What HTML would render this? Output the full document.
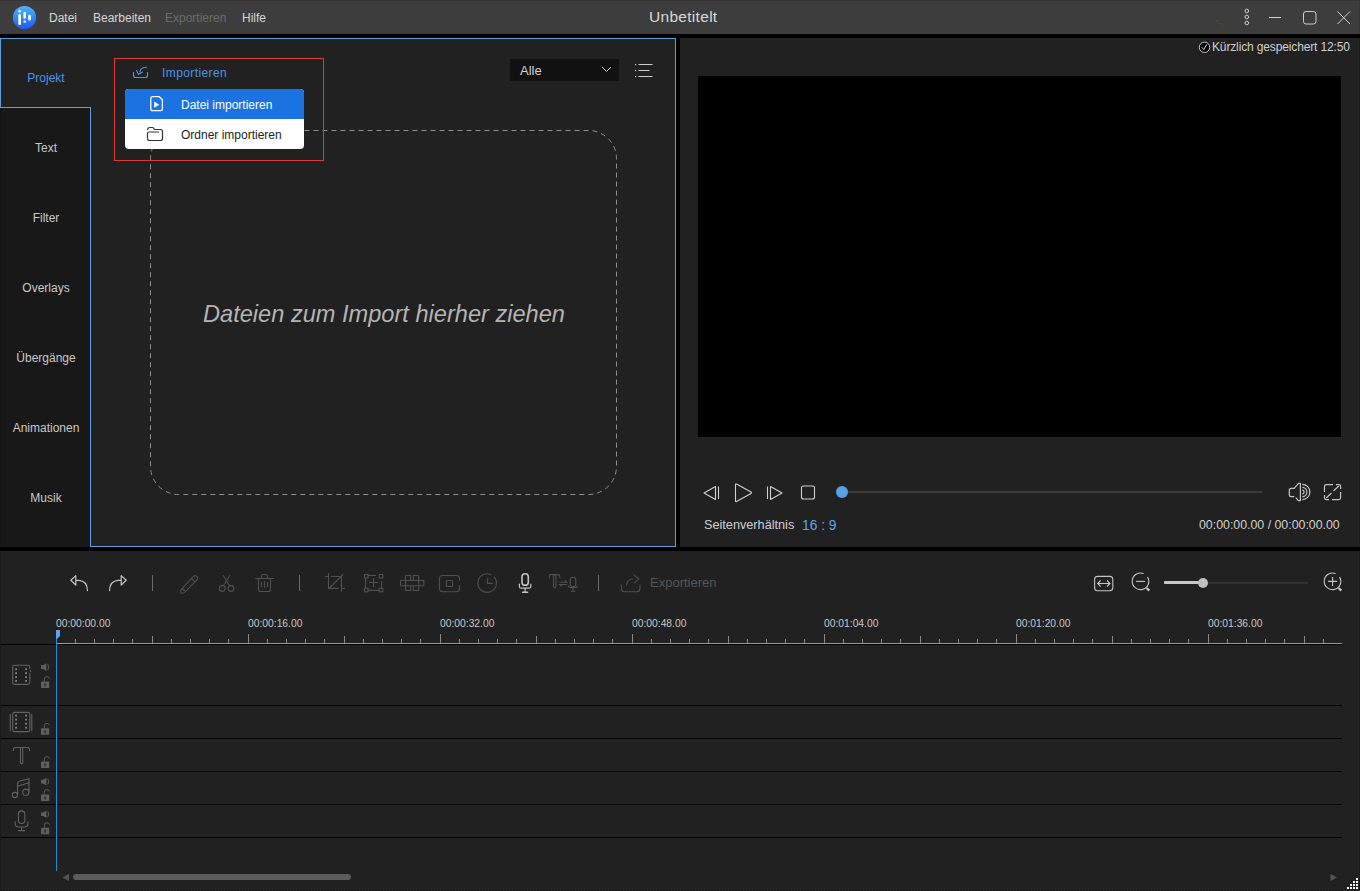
<!DOCTYPE html>
<html><head><meta charset="utf-8">
<style>
*{margin:0;padding:0;box-sizing:border-box}
html,body{width:1360px;height:891px;overflow:hidden;background:#000;font-family:"Liberation Sans",sans-serif}
.a{position:absolute}
.t{position:absolute;white-space:nowrap;line-height:1}
svg{position:absolute;overflow:visible}
#title{left:0;top:0;width:1360px;height:34px;background:#3d3d3d;border-top:1px solid #353535}
#left{left:0;top:38px;width:676px;height:509px;background:#212121}
#side{left:0;top:108px;width:90px;height:439px;background:#181818}
#right{left:680px;top:38px;width:680px;height:509px;background:#212121}
#video{left:698px;top:76px;width:643px;height:361px;background:#000}
#tl{left:0;top:551px;width:1360px;height:340px;background:#212121}
.bl{background:#5d9fdf}
.side{font-size:12px;color:#c8c8c8;left:1px;width:90px;text-align:center}
.menu{font-size:12px;color:#d6d6d6;top:12px}
.rl{font-size:10.3px;color:#c8c8c8;top:619px}
.tk{position:absolute;width:1px;background:#8a8a8a}
.tr{position:absolute;left:0;width:1342px;height:1px;background:#050505}
</style></head>
<body>
<!-- title bar -->
<div id="title" class="a"></div>
<svg style="left:12px;top:5px" width="26" height="26" viewBox="0 0 26 26">
  <defs><linearGradient id="lg" x1="0" y1="0" x2="0" y2="1"><stop offset="0" stop-color="#52b4ff"/><stop offset="0.55" stop-color="#2f86f8"/><stop offset="1" stop-color="#2356ee"/></linearGradient></defs>
  <circle cx="12.5" cy="12.5" r="11.6" fill="url(#lg)"/>
  <rect x="6.3" y="5.1" width="2.7" height="2.3" rx="1.15" fill="#fff"/>
  <rect x="6.3" y="9" width="2.7" height="11" rx="1.3" fill="#fff"/>
  <rect x="11.4" y="7.1" width="2.5" height="6.6" rx="1.25" fill="#fff"/>
  <rect x="11.4" y="15.6" width="2.5" height="2.2" rx="1.1" fill="#fff"/>
  <rect x="16.2" y="9.8" width="2.7" height="5.8" rx="1.3" fill="#fff"/>
</svg>
<span class="t menu" style="left:49px">Datei</span>
<span class="t menu" style="left:93px">Bearbeiten</span>
<span class="t menu" style="left:165px;color:#6c6c6c">Exportieren</span>
<span class="t menu" style="left:242px">Hilfe</span>
<span class="t" style="left:649px;top:9px;font-size:15.5px;letter-spacing:0.3px;color:#d8d8d8">Unbetitelt</span>
<svg style="left:1200px;top:0" width="160" height="34">
  <line x1="16.5" y1="20" x2="22.5" y2="26.5" stroke="#6a5a3a" stroke-width="1" stroke-dasharray="2 2"/>
  <circle cx="46.8" cy="11" r="1.8" fill="none" stroke="#cfcfcf" stroke-width="1"/>
  <circle cx="46.8" cy="17" r="1.8" fill="none" stroke="#cfcfcf" stroke-width="1"/>
  <circle cx="46.8" cy="23" r="1.8" fill="none" stroke="#cfcfcf" stroke-width="1"/>
  <line x1="69" y1="17.5" x2="81" y2="17.5" stroke="#cfcfcf" stroke-width="1"/>
  <rect x="103.5" y="11.5" width="12.5" height="12.5" rx="2.5" fill="none" stroke="#cfcfcf" stroke-width="1"/>
  <path d="M137.5 11.5 L150 24 M150 11.5 L137.5 24" stroke="#cfcfcf" stroke-width="1"/>
</svg>

<!-- left panel -->
<div id="left" class="a"></div>
<div id="side" class="a"></div>
<div class="a bl" style="left:0;top:38px;width:676px;height:1px"></div>
<div class="a bl" style="left:675px;top:38px;width:1px;height:509px"></div>
<div class="a bl" style="left:90px;top:546px;width:586px;height:1px"></div>
<div class="a bl" style="left:90px;top:107px;width:1px;height:440px"></div>
<div class="a bl" style="left:0;top:107px;width:91px;height:1px"></div>
<div class="a bl" style="left:0;top:38px;width:1px;height:70px"></div>

<span class="t side" style="top:72px;color:#4a94ec">Projekt</span>
<span class="t side" style="top:142px">Text</span>
<span class="t side" style="top:212px">Filter</span>
<span class="t side" style="top:282px">Overlays</span>
<span class="t side" style="top:352px">Übergänge</span>
<span class="t side" style="top:422px">Animationen</span>
<span class="t side" style="top:492px">Musik</span>

<!-- drop zone -->
<svg style="left:0;top:0" width="1360" height="891">
  <rect x="150.5" y="130.5" width="466" height="364" rx="28" fill="none" stroke="#8e8e8e" stroke-width="1" stroke-dasharray="5 4"/>
</svg>
<span class="t" style="left:203px;top:303px;font-size:23.6px;font-style:italic;color:#b4b4b4">Dateien zum Import hierher ziehen</span>

<!-- import dropdown -->
<div class="a" style="left:114px;top:58px;width:210px;height:103px;border:1px solid #e03a3a"></div>
<svg style="left:132px;top:65px" width="18" height="14" viewBox="0 0 18 14">
  <path d="M1.5 7 V10.5 Q1.5 12.5 3.5 12.5 H13.5 Q15.5 12.5 15.5 10.5 V7" fill="none" stroke="#4a94ec" stroke-width="1.1"/>
  <path d="M4.5 5.5 L6.5 9.5 L10.5 7 M7.8 6.8 Q9 2.3 14.5 2.3" fill="none" stroke="#4a94ec" stroke-width="1.1" stroke-linejoin="round" stroke-linecap="round"/>
</svg>
<span class="t" style="left:162px;top:67px;font-size:12px;letter-spacing:0.4px;color:#4a94ec">Importieren</span>
<div class="a" style="left:125px;top:89px;width:179px;height:60px;background:#fff;border-radius:4px;overflow:hidden">
  <div class="a" style="left:0;top:0;width:179px;height:30px;background:#1a73e0"></div>
</div>
<svg style="left:149px;top:95px" width="16" height="18" viewBox="0 0 16 18">
  <path d="M1.8 3.5 Q1.8 1.7 3.6 1.7 H10.3 L13.4 4.8 V13.9 Q13.4 15.7 11.6 15.7 H3.6 Q1.8 15.7 1.8 13.9 Z" fill="none" stroke="#fff" stroke-width="1.3" stroke-linejoin="round"/>
  <path d="M5.2 6.6 L10.2 9.7 L5.2 12.8 Z" fill="#fff"/>
</svg>
<span class="t" style="left:181px;top:99px;font-size:12px;color:#fff">Datei importieren</span>
<svg style="left:146px;top:126px" width="18" height="16" viewBox="0 0 18 16">
  <path d="M1.5 12.5 V7.5 Q1.5 6 3 6 H13" fill="none" stroke="#333" stroke-width="1.2"/>
  <path d="M1.5 4 Q1.5 1.5 4 1.5 H6.5 Q7.5 1.5 8.5 3.5 H14.5 Q16.5 3.5 16.5 5.5 V12.5 Q16.5 14.5 14.5 14.5 H3.5 Q1.5 14.5 1.5 12.5" fill="none" stroke="#333" stroke-width="1.2"/>
</svg>
<span class="t" style="left:181px;top:129px;font-size:12px;color:#222">Ordner importieren</span>

<!-- Alle dropdown -->
<div class="a" style="left:510px;top:59px;width:109px;height:22px;background:#111"></div>
<span class="t" style="left:520px;top:64px;font-size:13px;color:#d0d0d0">Alle</span>
<svg style="left:600px;top:65px" width="14" height="10">
  <path d="M2 2 L6.5 6.5 L11 2" fill="none" stroke="#d0d0d0" stroke-width="1"/>
</svg>
<svg style="left:630px;top:60px" width="26" height="20">
  <rect x="5" y="4" width="1.2" height="1.2" fill="#ccc"/>
  <rect x="5" y="10" width="1.2" height="1.2" fill="#ccc"/>
  <rect x="5" y="16" width="1.2" height="1.2" fill="#ccc"/>
  <line x1="8.5" y1="4.5" x2="22.5" y2="4.5" stroke="#ccc" stroke-width="1"/>
  <line x1="8.5" y1="10.5" x2="19.5" y2="10.5" stroke="#ccc" stroke-width="1"/>
  <line x1="8.5" y1="16.5" x2="22.5" y2="16.5" stroke="#ccc" stroke-width="1"/>
</svg>

<!-- right panel -->
<div id="right" class="a"></div>
<div id="video" class="a"></div>
<svg style="left:1198px;top:41px" width="13" height="13">
  <circle cx="6.5" cy="6.3" r="5.2" fill="#000" stroke="#c8c8c8" stroke-width="1"/>
  <path d="M3.8 6.3 L5.8 8.6 L8.8 3.3" fill="none" stroke="#d0d0d0" stroke-width="1"/>
</svg>
<span class="t" style="left:1212px;top:41px;font-size:12px;letter-spacing:-0.14px;color:#d0d0d0">Kürzlich gespeichert 12:50</span>


<!-- playback controls -->
<svg style="left:700px;top:480px" width="140" height="26">
  <path d="M15.5 6.5 L4 13 L15.5 19.5 Z" fill="none" stroke="#d0d0d0" stroke-width="1.1" stroke-linejoin="round"/>
  <line x1="18.5" y1="6.5" x2="18.5" y2="19" stroke="#d0d0d0" stroke-width="1.1"/>
  <path d="M35.5 4.5 Q35.5 3.5 36.5 4 L51 12 Q52 12.8 51 13.5 L36.5 21.5 Q35.5 22 35.5 21 Z" fill="none" stroke="#d0d0d0" stroke-width="1.1" stroke-linejoin="round"/>
  <line x1="67.5" y1="6.5" x2="67.5" y2="19" stroke="#d0d0d0" stroke-width="1.1"/>
  <path d="M70.5 6.5 L82 13 L70.5 19.5 Z" fill="none" stroke="#d0d0d0" stroke-width="1.1" stroke-linejoin="round"/>
  <rect x="101.5" y="6" width="13" height="13" rx="2" fill="none" stroke="#d0d0d0" stroke-width="1.1"/>
</svg>
<div class="a" style="left:848px;top:491px;width:414px;height:2px;background:#3a3a3a"></div>
<div class="a" style="left:836px;top:486px;width:12px;height:12px;border-radius:50%;background:#5aa0e6"></div>
<svg style="left:0;top:0" width="1360" height="891">
  <g fill="none" stroke="#c4c4c4" stroke-width="1.2" stroke-linejoin="round">
  <path d="M1295.8 497.6 L1298.3 500.6 H1300.4 V483.4 H1298.5 L1294.2 488.4 H1291.2 Q1289.3 488.4 1289.3 490.3 V494.8 Q1289.3 496.7 1291.2 496.7 H1294.3"/>
  <path d="M1302.3 484.4 A7.6 7.6 0 0 1 1302.3 499.6 M1302.3 487.4 A4.6 4.6 0 0 1 1302.3 496.6 M1302.3 490.2 A1.8 1.8 0 0 1 1302.3 493.8"/>
  <path d="M1333 484.6 H1326.3 Q1324.5 484.6 1324.5 486.4 V492 M1324.5 495 V497.8 Q1324.5 499.6 1326.3 499.6 H1329 M1332 499.6 H1338.8 Q1340.6 499.6 1340.6 497.8 V492 M1340.6 489 V486.4 Q1340.6 484.6 1338.8 484.6 H1336"/>
  <path d="M1326.2 498 L1331.5 493 M1333.5 491 L1338.8 486"/>
  </g>
</svg>
<span class="t" style="left:704px;top:519px;font-size:12.7px;color:#d0d0d0">Seitenverhältnis</span>
<span class="t" style="left:802px;top:519px;font-size:13.8px;color:#5aa5f0">16 : 9</span>
<span class="t" style="left:1199px;top:519px;font-size:12.35px;color:#d0d0d0">00:00:00.00 / 00:00:00.00</span>

<!-- timeline -->
<div id="tl" class="a"></div>

<svg style="left:0;top:0" width="1360" height="891">
  <g fill="none" stroke="#c4c4c4" stroke-width="1.2" stroke-linejoin="round" stroke-linecap="round">
  <path d="M75.8 575.6 L70.8 580.3 L75.8 585 Z M76 580.4 H78.8 Q87.4 581 87.4 590.6"/>
  <path d="M121.2 575.6 L126.2 580.3 L121.2 585 Z M121 580.4 H118.2 Q109.6 581 109.6 590.6"/>
  </g>
  <g fill="none" stroke="#6a6a6a" stroke-width="1">
  <path d="M152.5 575 V591 M299.5 575 V591 M598.5 575 V591"/>
  </g>
  <g fill="none" stroke="#505050" stroke-width="1.1">
  <!-- pencil -->
  <path d="M193.2 576.6 Q195 574.8 196.8 576.6 Q198.5 578.4 196.7 580.2 L184.6 592.3 Q183.6 593.2 181.6 593.2 Q180.6 593.2 180.6 592.2 Q180.6 590.4 181.4 589.4 Z M191.5 578.3 L195 581.8 M182.3 588.5 L185.4 591.6"/>
  <!-- scissors -->
  <path d="M223 575 L229.6 586 M230 575 L223.4 586"/>
  <circle cx="222.3" cy="588.5" r="2.9"/><circle cx="231" cy="588.5" r="2.9"/>
  <!-- trash -->
  <path d="M255 578.5 H274 M261.5 578.5 V576.5 Q261.5 574.5 263.5 574.5 H265.5 Q267.5 574.5 267.5 576.5 V578.5 M258.5 578.5 V589.5 Q258.5 591.5 260.5 591.5 H268.5 Q270.5 591.5 270.5 589.5 V578.5 M261.5 582 V587 M264.5 581 V588 M267.5 582 V587"/>
  <!-- crop -->
  <path d="M325 576.5 H328.5 M328.5 573 V588.4 H338.8 M331 576.5 H341.5 V591.8 M341.5 588.4 H345 M329.5 588 L343.4 574.2"/>
  <!-- select -->
  <rect x="364.5" y="574.5" width="3.5" height="3.5"/><rect x="379.3" y="574.5" width="3.5" height="3.5"/>
  <rect x="364.5" y="588.3" width="3.5" height="3.5"/><rect x="379.3" y="588.3" width="3.5" height="3.5"/>
  <path d="M368 575.5 H376 M365.5 578 V588.3 M381.5 581 V588.3 M368 590.4 H379.3 M369.2 582.5 H378 M373.5 578 V587"/>
  <!-- puzzle -->
  <path d="M400.5 580.5 H423.8 V585.8 H400.5 Z M405.5 575.5 V590.5 H410.7 V585.8 M405.5 575.5 H410.7 V580.5 M418.7 575.5 V590.5 H413.3 V585.8 M418.7 575.5 H413.3 V580.5"/>
  <!-- screen -->
  <path d="M459.5 581 V578.5 Q459.5 575.5 456.5 575.5 H442.5 Q439.5 575.5 439.5 578.5 V588.7 Q439.5 591.7 442.5 591.7 H456.5 Q459.5 591.7 459.5 588.7 V585.2"/>
  <rect x="446.3" y="580.5" width="6.3" height="6" rx="1"/>
  <!-- clock -->
  <path d="M491.2 574.7 A9.3 9.3 0 1 0 494 576.8"/>
  <path d="M487.5 578 V583.4 H492.8"/>
  <!-- tts -->
  <path d="M549.3 578.3 V576 Q549.3 574.6 550.8 574.6 H558.3 Q559.8 574.6 559.8 576 V578.3"/>
  <path d="M553.5 574.8 V586.2 Q553.5 587.8 554.7 587.8 Q555.9 587.8 555.9 586.2 V574.8"/>
  <path d="M559.5 582.3 H566.8 L564.6 580.4 M566.8 584.5 H559.5 L561.7 586.4"/>
  <rect x="570.2" y="577.2" width="5.6" height="9.6" rx="2.8"/>
  <path d="M568.5 585.5 Q568.5 587.6 570.5 587.6 H575.4 Q577.4 587.6 577.4 585.5 M572.9 587.6 V591.2 M570.8 591.3 H575.4"/>
  <!-- export -->
  <path d="M621.4 584.4 V588.7 Q621.4 591.7 624.4 591.7 H637 Q640 591.7 640 588.7 V584.8"/>
  <path d="M626.5 585.5 Q626.5 580 632.8 578.8 M633.3 574.6 L638.8 578.9 L634 583.2"/>
  </g>
  <!-- mic bright -->
  <g fill="none" stroke="#c4c4c4" stroke-linecap="round">
  <rect x="522" y="573.7" width="6.3" height="11.6" rx="3.15" stroke-width="1.6"/>
  <path d="M519.4 584 V586.4 Q519.4 588.2 521.2 588.2 H529 Q530.8 588.2 530.8 586.4 V584 M525.1 588.4 V592" stroke-width="1.2"/>
  <path d="M522.6 592.2 H527.6" stroke-width="1.6"/>
  </g>
  <g fill="none" stroke="#c4c4c4" stroke-width="1.1">
  <!-- fit -->
  <rect x="1094.6" y="576.4" width="18.2" height="14.3" rx="3"/>
  <path d="M1097.6 583.5 H1110 M1100.6 580.5 L1097.6 583.5 L1100.6 586.5 M1107 580.5 L1110 583.5 L1107 586.5"/>
  <!-- zoom out -->
  <path d="M1143.6 573.6 A8.3 8.3 0 1 0 1147.6 577"/>
  <path d="M1136.1 581.4 H1145.1"/>
  <path d="M1146.5 588 L1149.3 590.6" stroke-width="2.2"/>
  <!-- zoom in -->
  <path d="M1335.6 573.6 A8.3 8.3 0 1 0 1339.6 577"/>
  <path d="M1328.1 581.4 H1337.1 M1332.6 576.9 V585.9"/>
  <path d="M1338.5 588 L1341.3 590.6" stroke-width="2.2"/>
  </g>
</svg>
<span class="t" style="left:650px;top:576px;font-size:13px;color:#555">Exportieren</span>
<div class="a" style="left:1164px;top:581px;width:40px;height:3px;background:#c8c8c8;border-radius:1px"></div>
<div class="a" style="left:1204px;top:582px;width:104px;height:2px;background:#333"></div>
<div class="a" style="left:1198px;top:578px;width:10px;height:10px;border-radius:50%;background:#c0c0c0"></div>
<span class="t rl" style="left:56px">00:00:00.00</span><span class="t rl" style="left:248px">00:00:16.00</span><span class="t rl" style="left:440px">00:00:32.00</span><span class="t rl" style="left:632px">00:00:48.00</span><span class="t rl" style="left:824px">00:01:04.00</span><span class="t rl" style="left:1016px">00:01:20.00</span><span class="t rl" style="left:1208px">00:01:36.00</span>

<div class="tk" style="left:56px;top:634px;height:9px"></div><div class="tk" style="left:75px;top:639px;height:4px"></div><div class="tk" style="left:94px;top:639px;height:4px"></div><div class="tk" style="left:113px;top:639px;height:4px"></div><div class="tk" style="left:132px;top:639px;height:4px"></div><div class="tk" style="left:152px;top:636px;height:7px"></div><div class="tk" style="left:171px;top:639px;height:4px"></div><div class="tk" style="left:190px;top:639px;height:4px"></div><div class="tk" style="left:209px;top:639px;height:4px"></div><div class="tk" style="left:228px;top:639px;height:4px"></div><div class="tk" style="left:248px;top:634px;height:9px"></div><div class="tk" style="left:267px;top:639px;height:4px"></div><div class="tk" style="left:286px;top:639px;height:4px"></div><div class="tk" style="left:305px;top:639px;height:4px"></div><div class="tk" style="left:324px;top:639px;height:4px"></div><div class="tk" style="left:344px;top:636px;height:7px"></div><div class="tk" style="left:363px;top:639px;height:4px"></div><div class="tk" style="left:382px;top:639px;height:4px"></div><div class="tk" style="left:401px;top:639px;height:4px"></div><div class="tk" style="left:420px;top:639px;height:4px"></div><div class="tk" style="left:440px;top:634px;height:9px"></div><div class="tk" style="left:459px;top:639px;height:4px"></div><div class="tk" style="left:478px;top:639px;height:4px"></div><div class="tk" style="left:497px;top:639px;height:4px"></div><div class="tk" style="left:516px;top:639px;height:4px"></div><div class="tk" style="left:536px;top:636px;height:7px"></div><div class="tk" style="left:555px;top:639px;height:4px"></div><div class="tk" style="left:574px;top:639px;height:4px"></div><div class="tk" style="left:593px;top:639px;height:4px"></div><div class="tk" style="left:612px;top:639px;height:4px"></div><div class="tk" style="left:632px;top:634px;height:9px"></div><div class="tk" style="left:651px;top:639px;height:4px"></div><div class="tk" style="left:670px;top:639px;height:4px"></div><div class="tk" style="left:689px;top:639px;height:4px"></div><div class="tk" style="left:708px;top:639px;height:4px"></div><div class="tk" style="left:728px;top:636px;height:7px"></div><div class="tk" style="left:747px;top:639px;height:4px"></div><div class="tk" style="left:766px;top:639px;height:4px"></div><div class="tk" style="left:785px;top:639px;height:4px"></div><div class="tk" style="left:804px;top:639px;height:4px"></div><div class="tk" style="left:824px;top:634px;height:9px"></div><div class="tk" style="left:843px;top:639px;height:4px"></div><div class="tk" style="left:862px;top:639px;height:4px"></div><div class="tk" style="left:881px;top:639px;height:4px"></div><div class="tk" style="left:900px;top:639px;height:4px"></div><div class="tk" style="left:920px;top:636px;height:7px"></div><div class="tk" style="left:939px;top:639px;height:4px"></div><div class="tk" style="left:958px;top:639px;height:4px"></div><div class="tk" style="left:977px;top:639px;height:4px"></div><div class="tk" style="left:996px;top:639px;height:4px"></div><div class="tk" style="left:1016px;top:634px;height:9px"></div><div class="tk" style="left:1035px;top:639px;height:4px"></div><div class="tk" style="left:1054px;top:639px;height:4px"></div><div class="tk" style="left:1073px;top:639px;height:4px"></div><div class="tk" style="left:1092px;top:639px;height:4px"></div><div class="tk" style="left:1112px;top:636px;height:7px"></div><div class="tk" style="left:1131px;top:639px;height:4px"></div><div class="tk" style="left:1150px;top:639px;height:4px"></div><div class="tk" style="left:1169px;top:639px;height:4px"></div><div class="tk" style="left:1188px;top:639px;height:4px"></div><div class="tk" style="left:1208px;top:634px;height:9px"></div><div class="tk" style="left:1227px;top:639px;height:4px"></div><div class="tk" style="left:1246px;top:639px;height:4px"></div><div class="tk" style="left:1265px;top:639px;height:4px"></div><div class="tk" style="left:1284px;top:639px;height:4px"></div><div class="tk" style="left:1304px;top:636px;height:7px"></div><div class="tk" style="left:1323px;top:639px;height:4px"></div><div class="a" style="left:56px;top:643px;width:1286px;height:1px;background:#9a9a9a"></div>
<div class="a" style="left:0;top:644px;width:1342px;height:1px;background:#000"></div>
<div class="tr" style="top:705px"></div>
<div class="tr" style="top:738px"></div>
<div class="tr" style="top:771px"></div>
<div class="tr" style="top:804px"></div>
<div class="tr" style="top:837px"></div>
<div class="a" style="left:56px;top:637px;width:1px;height:234px;background:#1e8fd0"></div>
<svg style="left:56px;top:630px" width="6" height="12"><path d="M0 0 H4 V6 L1 9 H0 Z" fill="#5aa5f0"/></svg>
<!-- track icons -->
<svg style="left:0;top:0" width="60" height="891">
  <g fill="none" stroke="#626262" stroke-width="1.1">
  <path d="M29.8 669 V667 Q29.8 665.3 28 665.3 H14.4 Q12.7 665.3 12.7 667 V682.6 Q12.7 684.4 14.4 684.4 H28 Q29.8 684.4 29.8 682.6 V673 M29.8 670.5 Q30.8 671 30.8 672"/>
  <rect x="12.7" y="712.4" width="17.2" height="19.2" rx="1.8"/>
  <path d="M10.3 714 V731.3 M31.8 714 V731.3"/>
  <path d="M13.2 751 Q13.2 747.5 15.5 747.5 H27.5 Q29.6 747.5 29.6 751 M20.5 748 V762.5 Q20.5 763.8 21.6 763.8 Q22.7 763.8 22.7 762.5 V748"/>
  <circle cx="14.9" cy="795" r="2.6"/><circle cx="25.8" cy="792.2" r="3.1"/>
  <path d="M17.6 795 V783.5 Q17.6 781.8 19.3 781.3 L29 778.6 V792.2 M17.6 786.2 L29 782.8"/>
  <rect x="18.4" y="810.9" width="6.4" height="12.6" rx="3.2"/>
  <path d="M15.2 821.5 V823.5 Q15.2 827 18.5 827 H24.7 Q28 827 28 823.5 V821.5 M21.6 827 V830.3 M17.9 830.6 H25.2"/>
  </g>
  <g fill="#858585"><rect x="15.2" y="668.3" width="1.8" height="1.8"/><rect x="25.2" y="668.3" width="1.8" height="1.8"/><rect x="15.2" y="672.2" width="1.8" height="1.8"/><rect x="25.2" y="672.2" width="1.8" height="1.8"/><rect x="15.2" y="676.2" width="1.8" height="1.8"/><rect x="25.2" y="676.2" width="1.8" height="1.8"/><rect x="15.2" y="680" width="1.8" height="1.8"/><rect x="25.2" y="680" width="1.8" height="1.8"/><rect x="15.2" y="714.7" width="1.8" height="1.8"/><rect x="25.2" y="714.7" width="1.8" height="1.8"/><rect x="15.2" y="718.7" width="1.8" height="1.8"/><rect x="25.2" y="718.7" width="1.8" height="1.8"/><rect x="15.2" y="722.8" width="1.8" height="1.8"/><rect x="25.2" y="722.8" width="1.8" height="1.8"/><rect x="15.2" y="726.8" width="1.8" height="1.8"/><rect x="25.2" y="726.8" width="1.8" height="1.8"/></g>
  <path d="M41 665.3 H43.2 L46.4 663.3 V670.9 L43.2 668.9 H41 Z" fill="#5e5e5e"/>
  <path d="M47.8 664.3 Q49.8 667.0999999999999 47.8 669.9" fill="none" stroke="#5e5e5e" stroke-width="1"/><path d="M41 779.8 H43.2 L46.4 777.8 V785.4 L43.2 783.4 H41 Z" fill="#5e5e5e"/>
  <path d="M47.8 778.8 Q49.8 781.5999999999999 47.8 784.4" fill="none" stroke="#5e5e5e" stroke-width="1"/><path d="M41 812.4 H43.2 L46.4 810.4 V818.0 L43.2 816.0 H41 Z" fill="#5e5e5e"/>
  <path d="M47.8 811.4 Q49.8 814.1999999999999 47.8 817.0" fill="none" stroke="#5e5e5e" stroke-width="1"/>
  <path d="M44.3 681.6 V679.1 Q44.3 676.6 46.8 676.6 Q49 676.6 49.6 678.6" fill="none" stroke="#5e5e5e" stroke-width="1"/>
  <rect x="41" y="681.6" width="8.2" height="6.4" rx="0.6" fill="#5e5e5e"/>
  <path d="M45.1 683.2 L46.6 684.8000000000001 H45.7 V686.6 H44.5 V684.8000000000001 H43.6 Z" fill="#2a2a2a"/><path d="M44.3 728.3 V725.8 Q44.3 723.3 46.8 723.3 Q49 723.3 49.6 725.3" fill="none" stroke="#5e5e5e" stroke-width="1"/>
  <rect x="41" y="728.3" width="8.2" height="6.4" rx="0.6" fill="#5e5e5e"/>
  <path d="M45.1 729.9 L46.6 731.5 H45.7 V733.3 H44.5 V731.5 H43.6 Z" fill="#2a2a2a"/><path d="M44.3 761.6 V759.1 Q44.3 756.6 46.8 756.6 Q49 756.6 49.6 758.6" fill="none" stroke="#5e5e5e" stroke-width="1"/>
  <rect x="41" y="761.6" width="8.2" height="6.4" rx="0.6" fill="#5e5e5e"/>
  <path d="M45.1 763.2 L46.6 764.8000000000001 H45.7 V766.6 H44.5 V764.8000000000001 H43.6 Z" fill="#2a2a2a"/><path d="M44.3 794.6 V792.1 Q44.3 789.6 46.8 789.6 Q49 789.6 49.6 791.6" fill="none" stroke="#5e5e5e" stroke-width="1"/>
  <rect x="41" y="794.6" width="8.2" height="6.4" rx="0.6" fill="#5e5e5e"/>
  <path d="M45.1 796.2 L46.6 797.8000000000001 H45.7 V799.6 H44.5 V797.8000000000001 H43.6 Z" fill="#2a2a2a"/><path d="M44.3 827.8 V825.3 Q44.3 822.8 46.8 822.8 Q49 822.8 49.6 824.8" fill="none" stroke="#5e5e5e" stroke-width="1"/>
  <rect x="41" y="827.8" width="8.2" height="6.4" rx="0.6" fill="#5e5e5e"/>
  <path d="M45.1 829.4 L46.6 831.0 H45.7 V832.8 H44.5 V831.0 H43.6 Z" fill="#2a2a2a"/>
</svg>
<!-- scrollbar -->
<svg style="left:60px;top:870px" width="10" height="14"><path d="M2.5 7.5 L9 4 V11 Z" fill="#555"/></svg>
<div class="a" style="left:73px;top:874px;width:278px;height:6px;border-radius:3px;background:#5c5c5c"></div>
<svg style="left:1328px;top:870px" width="10" height="14"><path d="M9 7.5 L2.5 4 V11 Z" fill="#555"/></svg>
<svg style="left:1346px;top:877px" width="14" height="14">
  <g fill="#fff"><rect x="10" y="1" width="2" height="2"/><rect x="7" y="4" width="2" height="2"/><rect x="10" y="4" width="2" height="2"/>
  <rect x="4" y="7" width="2" height="2"/><rect x="7" y="7" width="2" height="2"/><rect x="10" y="7" width="2" height="2"/>
  <rect x="1" y="10" width="2" height="2"/><rect x="4" y="10" width="2" height="2"/><rect x="7" y="10" width="2" height="2"/><rect x="10" y="10" width="2" height="2"/></g>
</svg>

<div class="a" style="left:1359px;top:0;width:1px;height:34px;background:#353535"></div>
<div class="a" style="left:0;top:108px;width:1px;height:439px;background:#151515"></div>
<div class="a" style="left:0;top:551px;width:1px;height:340px;background:#1a1a1a"></div>
<div class="a" style="left:0;top:890px;width:1346px;height:1px;background:repeating-linear-gradient(90deg,#181818 0 2px,#212121 2px 3px)"></div>

<div class="a" style="left:1358px;top:38px;width:1px;height:509px;background:#252525"></div>
<div class="a" style="left:1359px;top:38px;width:1px;height:509px;background:#1b1b1b"></div>
<div class="a" style="left:1358px;top:551px;width:1px;height:340px;background:#252525"></div>
<div class="a" style="left:1359px;top:551px;width:1px;height:340px;background:#1b1b1b"></div>
</body></html>
